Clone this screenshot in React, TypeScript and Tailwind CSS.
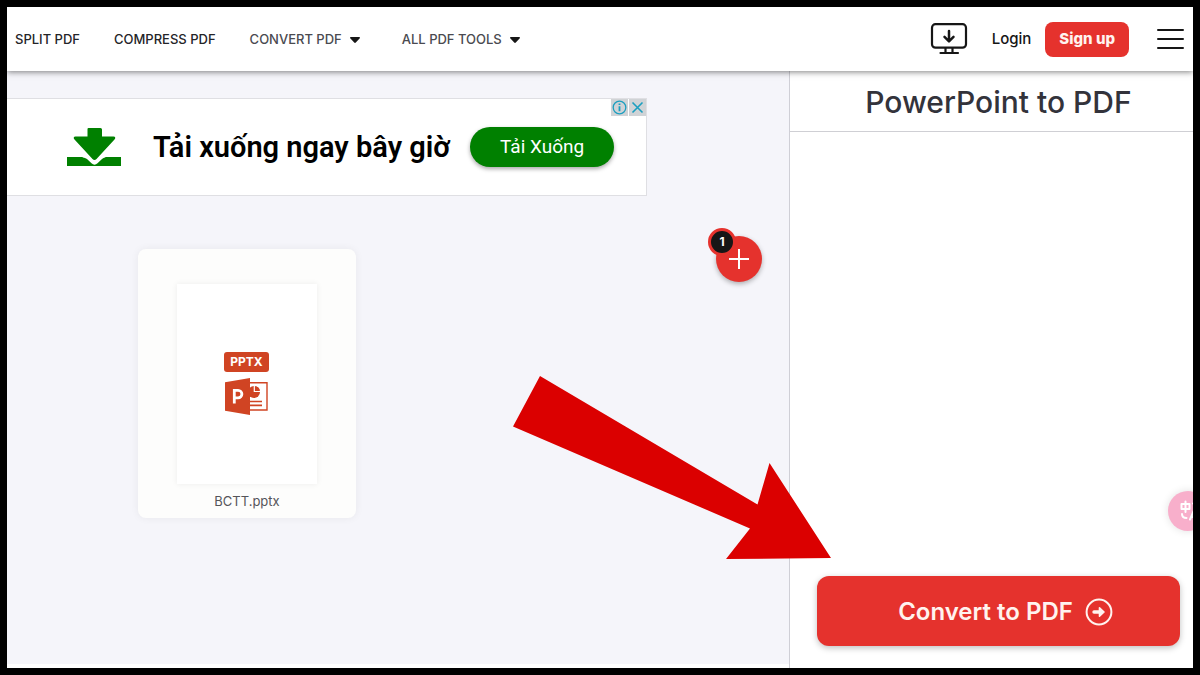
import type { ReactNode } from "react";

function Caret() {
  return (
    <svg viewBox="0 0 10 6" className="h-[6px] w-[10px] text-[#161616]" fill="currentColor" aria-hidden="true">
      <path d="M0.8 0h8.4c.7 0 1 .7.6 1.200L5.800 5.500c-.4.500-1.200.500-1.600 0L.2 1.200C-.2.700.1 0 .8 0z" />
    </svg>
  );
}

function NavMenu({ children }: { children: ReactNode }) {
  return (
    <button type="button" className="flex items-center gap-2 pr-2 text-[#4a4a50]">
      {children}
      <Caret />
    </button>
  );
}

function Header() {
  return (
    <header className="relative z-10 flex h-16 items-center justify-between bg-white pl-2 pr-[9px] shadow-[0_1px_6px_rgba(0,0,0,0.5)]">
      <nav className="flex items-center gap-[34px] whitespace-nowrap pt-px text-[13px] font-medium text-[#242428]">
        <a href="#split">SPLIT PDF</a>
        <a href="#compress">COMPRESS PDF</a>
        <NavMenu>CONVERT PDF</NavMenu>
        <NavMenu>ALL PDF TOOLS</NavMenu>
      </nav>
      <div className="flex items-center text-[15px]">
        <a href="#desktop" aria-label="Desktop app" className="mr-6">
          <svg viewBox="0 0 38 32" className="h-8 w-[38px]" fill="none" stroke="#161616" strokeWidth="2.200" strokeLinecap="round" strokeLinejoin="round">
            <rect x="2" y="1.200" width="34" height="23.500" rx="3.500" />
            <path d="M15.500 25v4.500M22.500 25v4.500M10.500 30h17.500" />
            <path d="M19 8v10M14.500 13.800L19 18.300l4.500-4.500" strokeWidth="2.500" />
          </svg>
        </a>
        <a href="#login" className="mr-[14px] font-medium text-[#161616]">Login</a>
        <button type="button" className="mr-7 h-[35px] rounded-lg bg-[#e5322d] px-[14px] font-extrabold text-[#fff3ef]">Sign up</button>
        <button type="button" aria-label="Menu">
          <svg viewBox="0 0 27 22" className="h-[22px] w-[27px]" stroke="#161616" strokeWidth="2" strokeLinecap="round">
            <path d="M1 2h25M1 11h25M1 20h25" />
          </svg>
        </button>
      </div>
    </header>
  );
}

function AdBanner() {
  return (
    <section aria-label="Advertisement" className="relative flex h-[98px] max-w-[640px] items-center border border-l-0 border-[#dfdfe3] bg-white pl-[60px] font-['Roboto',sans-serif]">
      <svg viewBox="0 0 54 40" className="mr-8 h-10 w-[54px] shrink-0" aria-hidden="true">
        <path d="M0 30h54v9H0z" fill="#008000" />
        <path d="M14 29h26l-2 1.500Q36.500 30.500 35 32L30.500 36.300Q27.500 39 24.500 36.300L20 32Q18 30.500 16 30.500z" fill="#fff" />
        <path d="M20.500 2Q20.500 1 21.500 1h12Q35 1 35 2.500V9.500h11.500c2 0 2.300 1.700 1 3L29.500 32Q27.500 34 25.500 32L7.500 12.500c-1.300-1.300-1-3 1-3h12z" fill="#008000" />
      </svg>
      <p className="whitespace-nowrap text-[29px] font-semibold leading-9 text-black">Tải xuống ngay bây giờ</p>
      <button type="button" className="ml-5 h-10 w-36 shrink-0 rounded-full bg-[#008000] text-[19px] text-white shadow-[0_2px_4px_rgba(0,0,0,0.35)]">Tải Xuống</button>
      <div className="absolute right-0 top-0 flex gap-px">
        <button type="button" aria-label="Ad information" className="bg-[#d0d3d6]">
          <svg viewBox="0 0 17 17" className="size-[17px]" fill="none" stroke="#1b9fc0" strokeWidth="1.300">
            <circle cx="8.500" cy="8.500" r="6.300" />
            <path d="M8.500 7.200v5M8.500 4.500v1.500" strokeWidth="1.800" />
          </svg>
        </button>
        <button type="button" aria-label="Close ad" className="bg-[#d0d3d6]">
          <svg viewBox="0 0 17 17" className="size-[17px]" stroke="#1b9fc0" strokeWidth="1.600">
            <path d="M3.500 3.500l10 10M13.500 3.500l-10 10" />
          </svg>
        </button>
      </div>
    </section>
  );
}

function FileCard() {
  return (
    <figure className="ml-[131px] mt-[53px] flex w-[218px] flex-col items-center rounded-lg bg-[#fdfdfc] pb-2 pt-[35px] shadow-[0_0_8px_rgba(0,0,0,0.06)]">
      <div className="flex h-[200px] w-[140px] flex-col items-center justify-center gap-[6px] bg-white pb-px pr-px shadow-[0_0_6px_rgba(0,0,0,0.07)]">
        <span className="rounded-[3px] bg-[#d04423] px-[6px] text-[12px] font-bold leading-5 text-white">PPTX</span>
        <svg viewBox="0 0 43 37" className="h-[37px] w-[43px]" aria-hidden="true">
          <path d="M24 4.700h18V32H24" fill="#fff" stroke="#d04423" strokeWidth="1.400" />
          <circle cx="29" cy="14" r="6" fill="#d04423" />
          <path d="M29.300 7v6.500h6.500" fill="none" stroke="#fff" strokeWidth="1.200" />
          <path d="M30.300 8.300a5 5 0 0 1 4.500 4.300h-4.500z" fill="#d04423" />
          <path d="M24 23.500h13M24 27.300h13" stroke="#d04423" strokeWidth="1.700" />
          <path d="M0 4.200L25 0v37L0 32.800z" fill="#d04423" />
          <path d="M9.300 25.500V12.300h3.800a3.600 3.600 0 0 1 0 7.600H9.300" fill="none" stroke="#fff" strokeWidth="2.800" />
        </svg>
      </div>
      <figcaption className="mt-2 text-[13px] leading-[18px] text-[#55555a]">BCTT.pptx</figcaption>
    </figure>
  );
}

function AddButton() {
  return (
    <div className="absolute right-[27px] top-[165px]">
      <button type="button" aria-label="Add files" className="flex size-[46px] items-center justify-center rounded-full bg-[#e5322d] shadow-[0_2px_5px_rgba(0,0,0,0.3)]">
        <svg viewBox="0 0 20 20" className="size-5" stroke="#fff" strokeWidth="2">
          <path d="M10 0v20M0 10h20" />
        </svg>
      </button>
      <span className="absolute -left-2 -top-2 flex size-7 items-center justify-center rounded-full border-3 border-[#e5322d] bg-[#161616] text-[12px] font-bold text-white">1</span>
    </div>
  );
}

function Sidebar() {
  return (
    <aside className="flex w-[404px] shrink-0 flex-col border-l border-[#cfcfd6] bg-white">
      <h1 className="border-b border-[#cfcfd4] pb-[9px] pl-[14px] pt-[11px] text-center text-[30px] font-medium leading-10 text-[#33333b]">PowerPoint to PDF</h1>
      <button type="button" className="mb-[22px] ml-[27px] mr-[13px] mt-auto flex h-[70px] items-center justify-center gap-3 rounded-xl bg-[#e5322d] pl-[14px] pt-px text-[24px] font-semibold text-[#fff3ef] shadow-[0_2px_6px_rgba(0,0,0,0.25)]">
        Convert to PDF
        <svg viewBox="0 0 28 28" className="size-7" fill="none" stroke="currentColor" aria-hidden="true">
          <circle cx="14" cy="14" r="12.400" strokeWidth="2" />
          <path d="M9 14h6" strokeWidth="3.400" strokeLinecap="round" />
          <path d="M14.500 9.800l4.500 4.200-4.500 4.200z" fill="currentColor" strokeWidth="1.600" strokeLinejoin="round" />
        </svg>
      </button>
    </aside>
  );
}

function TranslateBubble() {
  return (
    <button type="button" aria-label="Translate" className="absolute -right-[15px] bottom-[137px] size-10 rounded-full bg-[#f8afcb] shadow-[0_0_8px_rgba(0,0,0,0.12)]">
      <svg viewBox="0 0 40 40" className="size-10" fill="none" stroke="#fff" strokeWidth="2" strokeLinecap="round" strokeLinejoin="round">
        <path d="M13.500 13h8v5h-8zM17.500 10.500v10.500" />
        <path d="M14 23c0 3 1.500 4 4.500 4M25 12.500c2.500 0 3.500 1 3.500 3.500M22 28.500l3.500-8 3.500 8M23 26h5" />
      </svg>
    </button>
  );
}

function PointerArrow() {
  return (
    <svg viewBox="0 0 318 183" className="pointer-events-none absolute bottom-[109px] right-[362px] h-[183px] w-[318px]" aria-hidden="true">
      <path d="M27 0L244.500 128.500 256.500 87 318 182 213 183 237 152.500 0 50.500z" fill="#db0000" />
    </svg>
  );
}

export default function App() {
  return (
    <div className="flex min-h-screen flex-col border-7 border-black bg-white font-['Inter',sans-serif]">
      <Header />
      <main className="relative flex flex-1 overflow-hidden">
        <div className="relative mb-1 min-w-0 flex-1 bg-[#f5f5fa] pb-8 pt-[27px]">
          <AdBanner />
          <FileCard />
          <AddButton />
        </div>
        <Sidebar />
        <TranslateBubble />
        <PointerArrow />
      </main>
    </div>
  );
}
